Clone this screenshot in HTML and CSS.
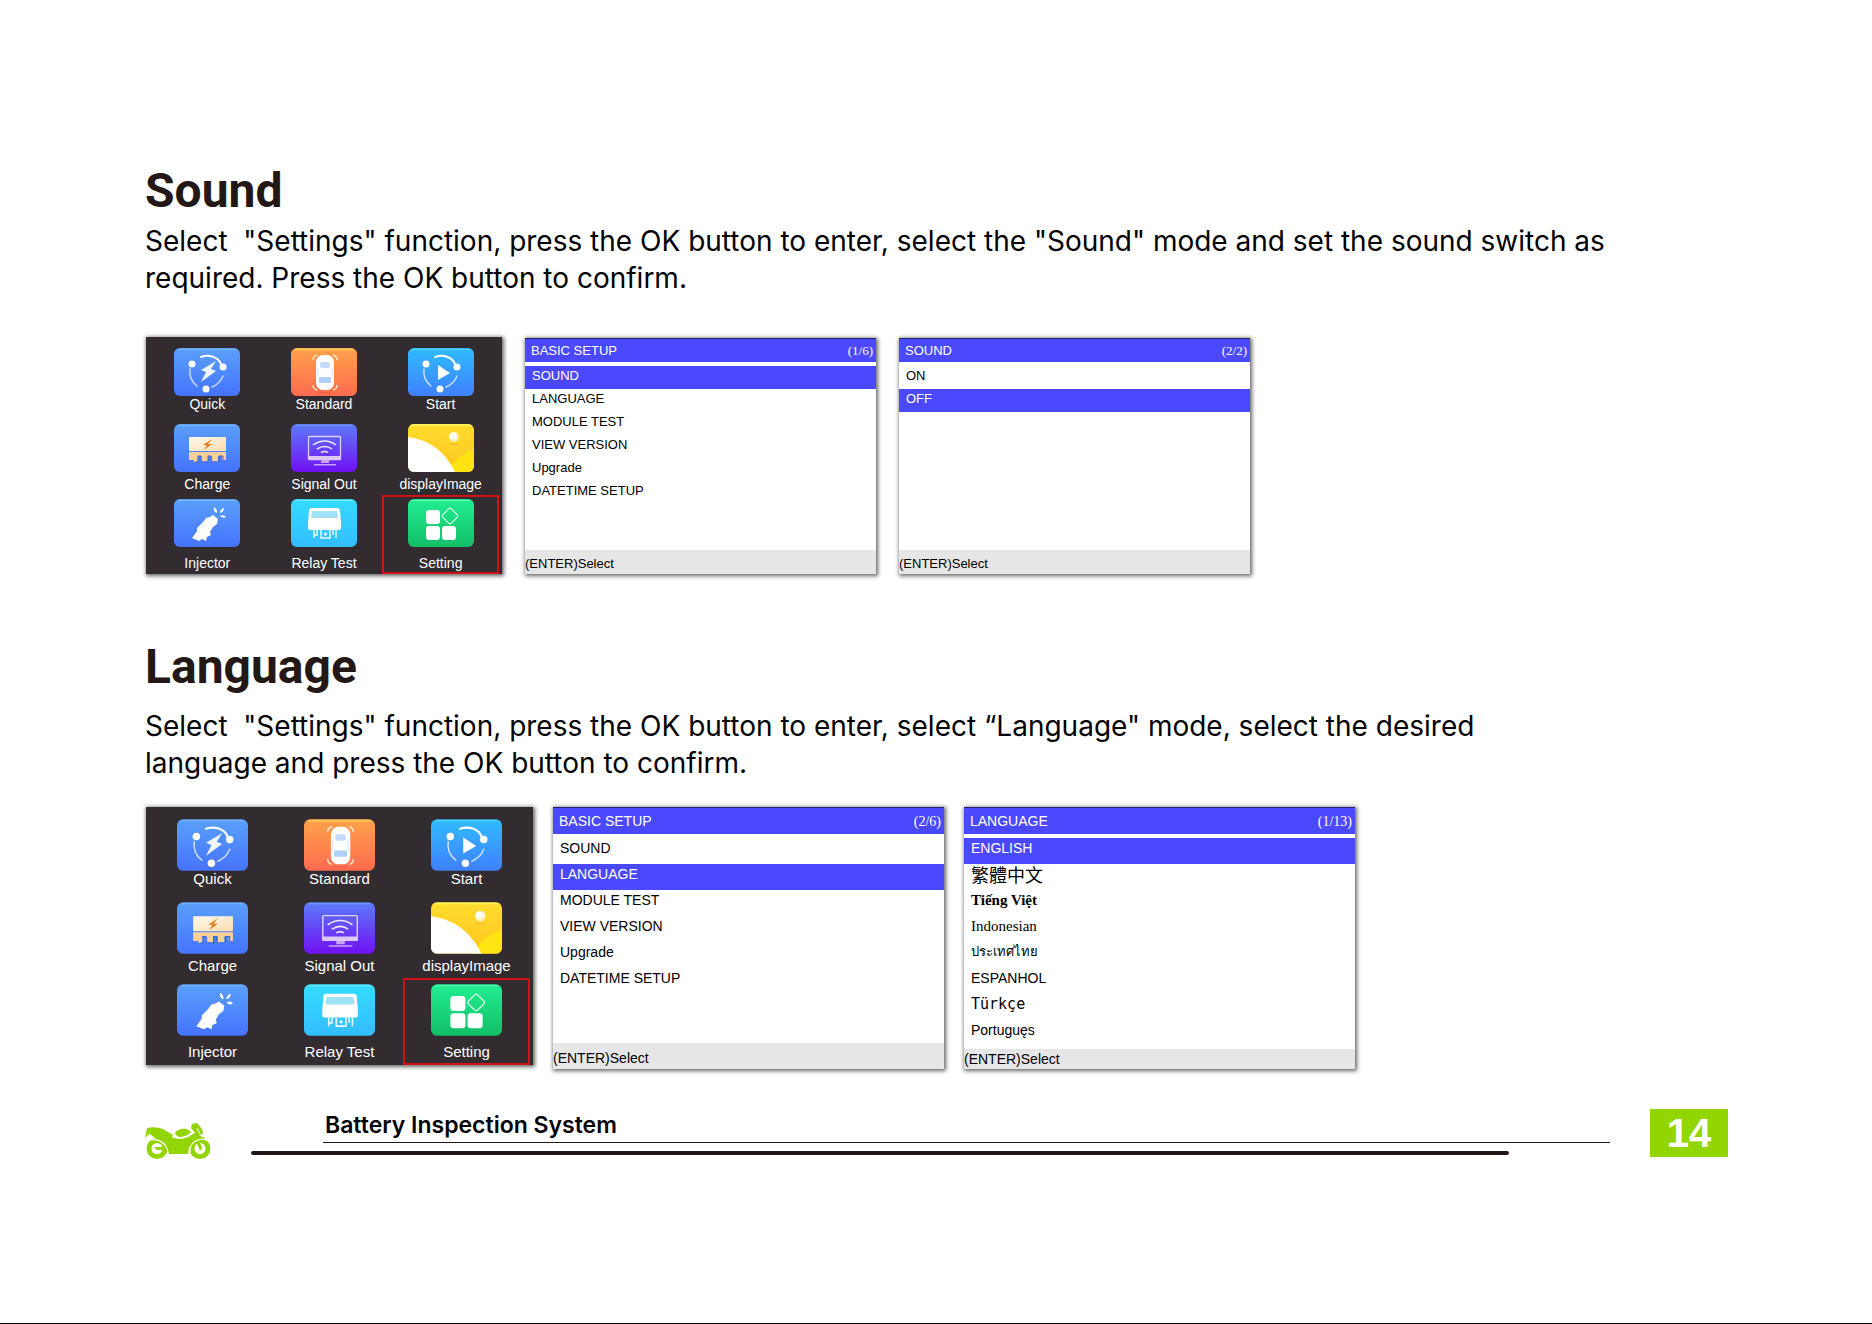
FILE: index.html
```html
<!DOCTYPE html>
<html lang="en">
<head>
    <meta charset="UTF-8">
    <meta name="viewport" content="width=device-width, initial-scale=1">
    <title>Battery Inspection System - 14</title>
    <link rel="stylesheet" href="styles.css">
</head>
<body>
<!-- icon sprite -->
<svg class="sprite" aria-hidden="true">
    <defs>
        <linearGradient id="blue" x1="0" y1="0" x2="0" y2="1">
            <stop offset="0" stop-color="#5aa0fa"/>
            <stop offset="1" stop-color="#4573ff"/>
        </linearGradient>
        <linearGradient id="orange" x1="0" y1="0" x2="0" y2="1">
            <stop offset="0" stop-color="#ffa24a"/>
            <stop offset="1" stop-color="#ff6b4f"/>
        </linearGradient>
        <linearGradient id="sky" x1="0" y1="0" x2="0" y2="1">
            <stop offset="0" stop-color="#2fbcff"/>
            <stop offset="1" stop-color="#3f80ff"/>
        </linearGradient>
        <linearGradient id="violet" x1="0" y1="0" x2="0" y2="1">
            <stop offset="0" stop-color="#5c7cf8"/>
            <stop offset="1" stop-color="#7010f4"/>
        </linearGradient>
        <linearGradient id="yellow" x1="0" y1="0" x2="0" y2="1">
            <stop offset="0" stop-color="#ffdc2e"/>
            <stop offset="1" stop-color="#ffc61e"/>
        </linearGradient>
        <linearGradient id="cyan" x1="0" y1="0" x2="0" y2="1">
            <stop offset="0" stop-color="#34dcff"/>
            <stop offset="1" stop-color="#33bdff"/>
        </linearGradient>
        <linearGradient id="green" x1="0" y1="0" x2="0" y2="1">
            <stop offset="0" stop-color="#22ee92"/>
            <stop offset="1" stop-color="#12be66"/>
        </linearGradient>
        <linearGradient id="cream" x1="0" y1="0" x2="1" y2="1">
            <stop offset="0" stop-color="#fffaf0"/>
            <stop offset="1" stop-color="#ffdcae"/>
        </linearGradient>
        <clipPath id="tileClip"><rect width="66" height="48" rx="6"/></clipPath>
    </defs>
    <symbol id="ring" viewBox="0 0 66 48">
        <g fill="none" stroke="#fff" stroke-linecap="round">
            <path d="M27 9c8-3 17 0 20 7" stroke-width="2"/>
            <path d="M16 21c-1 7 2 13 7 17" stroke-width="1.5" opacity=".7"/>
            <path d="M49 28c-2 5-6 9-11 11" stroke-width="1.5" opacity=".7"/>
        </g>
        <g fill="#fff">
            <circle cx="18" cy="16" r="3.5"/>
            <circle cx="49" cy="19" r="3.5"/>
            <circle cx="32" cy="41" r="3.5"/>
        </g>
    </symbol>
    <symbol id="quick" viewBox="0 0 66 48">
        <rect width="66" height="48" rx="6" fill="url(#blue)"/>
        <path d="M4 1.500h58" stroke="#8fc6ff" stroke-opacity=".6"/>
        <use href="#ring"/>
        <path d="M42 13 27 22l5 2-5 10 15-11-5-2z" fill="#f0f6ff"/>
    </symbol>
    <symbol id="standard" viewBox="0 0 66 48">
        <rect width="66" height="48" rx="6" fill="url(#orange)"/>
        <path d="M4 1.500h58" stroke="#ffe05a" stroke-opacity=".6" stroke-width="2"/>
        <g fill="none" stroke="#ffe8c8" stroke-width="1.300">
            <path d="M22 12q0-4 4-5M42 7q4 1 4 5M22 37q0 4 4 5M42 42q4-1 4-5"/>
        </g>
        <rect x="25" y="7" width="18" height="35" rx="7" fill="#fff"/>
        <rect x="29" y="14" width="10" height="6" rx="2" fill="#c4dcfa"/>
        <rect x="28" y="29" width="12" height="6" rx="1" fill="#aed0f8"/>
        <path d="M27 20v9M41 20v9" stroke="#d8e6f6"/>
        <path d="M28 44.500h12" stroke="#d04a2a" stroke-dasharray="1 1.500"/>
    </symbol>
    <symbol id="start" viewBox="0 0 66 48">
        <rect width="66" height="48" rx="6" fill="url(#sky)"/>
        <path d="M4 1.500h58" stroke="#6fe0ff" stroke-opacity=".6"/>
        <use href="#ring"/>
        <path d="M30 17v15l12-7z" fill="#fff"/>
    </symbol>
    <symbol id="charge" viewBox="0 0 66 48">
        <rect width="66" height="48" rx="6" fill="url(#blue)"/>
        <path d="M4 1.500h58" stroke="#8fc6ff" stroke-opacity=".6"/>
        <rect x="15" y="13" width="37" height="14" rx="1" fill="url(#cream)"/>
        <path d="M15 28h37v8h-4v-4h-4v5h-6v-5h-4v5h-6v-5h-4v6h-4v-2h-5z" fill="#fbd098"/>
        <path d="M21 38h3v-6h3M34 39v-7h3v4M45 38v-6h4v4" fill="none" stroke="#3a66c8"/>
        <path d="M38 15l-9 6h4l-3 5 8-6h-4z" fill="#e87d1c"/>
    </symbol>
    <symbol id="signal" viewBox="0 0 66 48">
        <rect width="66" height="48" rx="6" fill="url(#violet)"/>
        <path d="M4 1.500h58" stroke="#7fb0ff" stroke-opacity=".6"/>
        <rect x="17.500" y="12.500" width="32" height="23" rx="1" fill="none" stroke="#ddd2ff" stroke-width="1.300"/>
        <path d="M17 32h33v4H17z" fill="#dcc8ff"/>
        <path d="M30 36h8v3h-8zM23 40h22v1.500H23z" fill="#c8a4ff"/>
        <g fill="none" stroke="#ede6ff" stroke-width="1.500">
            <path d="M22 21q12-8 23 0M26 25q8-5 15 0M30 28.500q4-2 7 0"/>
        </g>
    </symbol>
    <symbol id="image" viewBox="0 0 66 48">
        <g clip-path="url(#tileClip)">
            <rect width="66" height="48" fill="url(#yellow)"/>
            <path d="M0 0h66v2H0z" fill="#fff05a"/>
            <path d="M40 48Q46 32 66 26v22z" fill="#ffe414"/>
            <path d="M0 13Q32 17 47 48H0z" fill="#fff"/>
            <circle cx="46" cy="13" r="5" fill="#fff0b8"/>
            <circle cx="45" cy="12" r="3.500" fill="#fff"/>
            <path d="M42 20h8" stroke="#d8a030" stroke-dasharray="1.500 1.500"/>
        </g>
    </symbol>
    <symbol id="injector" viewBox="0 0 66 48">
        <rect width="66" height="48" rx="6" fill="url(#blue)"/>
        <path d="M4 1.500h58" stroke="#8fc6ff" stroke-opacity=".6"/>
        <path d="M39 16l5 4-1 5-4 3-3 5 1 3-4 2-1 4-4-2-3 2-7-3 5-7 0-3 6-6 3-4 4-1z" fill="#fff"/>
        <path d="M40 8q4 3 3 6-4-1-3-6zM50 9q0 4-4 5 0-4 4-5zM46 17q4-2 6 1-3 2-6-1z" fill="#fff"/>
    </symbol>
    <symbol id="relay" viewBox="0 0 66 48">
        <rect width="66" height="48" rx="6" fill="url(#cyan)"/>
        <path d="M4 1.500h58" stroke="#8af4ff" stroke-opacity=".7"/>
        <path d="M21 9h25q3 0 3 3l1 11v6q0 2-2 2H19q-2 0-2-2v-6l1-11q0-3 3-3z" fill="#fff"/>
        <path d="M21 12h25l1 7H20z" fill="#9fe2f6"/>
        <path d="M23 31v8M26 31v5h-3M45 31v8M42 31v5M30 31v8h9v-8" fill="none" stroke="#eafaff" stroke-width="1.500"/>
        <circle cx="34.500" cy="35" r="1.500" fill="#fff"/>
    </symbol>
    <symbol id="setting" viewBox="0 0 66 48">
        <rect width="66" height="48" rx="6" fill="url(#green)"/>
        <path d="M4 1.500h58" stroke="#7dffc4" stroke-opacity=".7"/>
        <g fill="#fff">
            <rect x="18" y="11" width="14" height="14" rx="3"/>
            <rect x="18" y="27" width="14" height="14" rx="3"/>
            <rect x="34" y="27" width="14" height="14" rx="3"/>
        </g>
        <rect x="36" y="11" width="12" height="12" rx="2" fill="none" stroke="#d4ffe8" stroke-width="1.200" transform="rotate(45 42 17)"/>
    </symbol>
</svg>

<main class="page">
    <section class="topic">
        <h2>Sound</h2>
        <p>Select&nbsp; "Settings" function, press the OK button to enter, select the "Sound" mode and set the sound switch as<br>required. Press the OK button to confirm.</p>
        <div class="screens">
            <div class="launcher">
                <button class="tile"><svg><use href="#quick"/></svg><span>Quick</span></button>
                <button class="tile"><svg><use href="#standard"/></svg><span>Standard</span></button>
                <button class="tile"><svg><use href="#start"/></svg><span>Start</span></button>
                <button class="tile middle"><svg><use href="#charge"/></svg><span>Charge</span></button>
                <button class="tile middle"><svg><use href="#signal"/></svg><span>Signal Out</span></button>
                <button class="tile middle"><svg><use href="#image"/></svg><span>displayImage</span></button>
                <button class="tile bottom"><svg><use href="#injector"/></svg><span>Injector</span></button>
                <button class="tile bottom"><svg><use href="#relay"/></svg><span>Relay Test</span></button>
                <button class="tile bottom marked"><svg><use href="#setting"/></svg><span>Setting</span></button>
            </div>
            <div class="screen">
                <header><span>BASIC SETUP</span><span class="count">(1/6)</span></header>
                <ul>
                    <li class="active">SOUND</li>
                    <li>LANGUAGE</li>
                    <li>MODULE TEST</li>
                    <li>VIEW VERSION</li>
                    <li>Upgrade</li>
                    <li>DATETIME SETUP</li>
                </ul>
                <footer>(ENTER)Select</footer>
            </div>
            <div class="screen">
                <header><span>SOUND</span><span class="count">(2/2)</span></header>
                <ul>
                    <li>ON</li>
                    <li class="active">OFF</li>
                </ul>
                <footer>(ENTER)Select</footer>
            </div>
        </div>
    </section>

    <section class="topic large">
        <h2>Language</h2>
        <p>Select&nbsp; "Settings" function, press the OK button to enter, select “Language" mode, select the desired<br>language and press the OK button to confirm.</p>
        <div class="screens">
            <div class="launcher">
                <button class="tile"><svg><use href="#quick"/></svg><span>Quick</span></button>
                <button class="tile"><svg><use href="#standard"/></svg><span>Standard</span></button>
                <button class="tile"><svg><use href="#start"/></svg><span>Start</span></button>
                <button class="tile middle"><svg><use href="#charge"/></svg><span>Charge</span></button>
                <button class="tile middle"><svg><use href="#signal"/></svg><span>Signal Out</span></button>
                <button class="tile middle"><svg><use href="#image"/></svg><span>displayImage</span></button>
                <button class="tile bottom"><svg><use href="#injector"/></svg><span>Injector</span></button>
                <button class="tile bottom"><svg><use href="#relay"/></svg><span>Relay Test</span></button>
                <button class="tile bottom marked"><svg><use href="#setting"/></svg><span>Setting</span></button>
            </div>
            <div class="screen">
                <header><span>BASIC SETUP</span><span class="count">(2/6)</span></header>
                <ul>
                    <li>SOUND</li>
                    <li class="active">LANGUAGE</li>
                    <li>MODULE TEST</li>
                    <li>VIEW VERSION</li>
                    <li>Upgrade</li>
                    <li>DATETIME SETUP</li>
                </ul>
                <footer>(ENTER)Select</footer>
            </div>
            <div class="screen languages">
                <header><span>LANGUAGE</span><span class="count">(1/13)</span></header>
                <ul>
                    <li class="active">ENGLISH</li>
                    <li class="chinese" lang="zh-Hant">繁體中文</li>
                    <li class="serif" lang="vi"><b>Tiếng Việt</b></li>
                    <li class="serif">Indonesian</li>
                    <li class="thai" lang="th">ประเทศไทย</li>
                    <li>ESPANHOL</li>
                    <li class="mono" lang="tr">Türkçe</li>
                    <li>Portuguęs</li>
                </ul>
                <footer>(ENTER)Select</footer>
            </div>
        </div>
    </section>

    <footer class="page-footer">
        <svg class="bike" viewBox="0 0 66 36" aria-hidden="true">
            <g fill="#93d500">
                <path d="M0 15 2 5q8-2 16 1l10 6q-2 2 1 3 10 2 17-3l4-2-4-5 1-4 5-1 5 6 1 5-4 1 3 2q3 0 5 4-7-3-12 1l-6 5-1 7H24l-2-5q-3-8-12-11L5 11q-3 1-5 4z"/>
                <path d="M30 10q4-5 12-4l4 3q-3 4-10 5-5 0-6-4z"/>
            </g>
            <g fill="none" stroke="#93d500" stroke-width="5">
                <circle cx="12" cy="25.500" r="8"/>
                <circle cx="55" cy="25.500" r="8"/>
            </g>
            <path d="M9 24h14l1 3H12zM50 16l3-1 4 10-2 3z" fill="#93d500"/>
            <path d="M28 13q8 5 18-1M52 5l3 6" fill="none" stroke="#fff"/>
            <path d="M1 18q12-4 19 4 3 4 3 8M45 29q-1-9 8-12 6-2 10 1" fill="none" stroke="#fff" stroke-width="1.200"/>
        </svg>
        <div class="rules">
            <div class="title">Battery Inspection System</div>
            <div class="bar"></div>
        </div>
        <div class="number">14</div>
    </footer>
</main>
</body>
</html>
```
FILE: styles.css
```css
* {
    margin: 0;
    padding: 0;
    box-sizing: border-box;
}

body {
    background: #fff;
    color: #000;
    font-family: "Liberation Sans", Arial, sans-serif;
}

.sprite {
    position: absolute;
    width: 0;
    height: 0;
}

.page {
    min-height: 100vh;
    padding: 163px 144px 40px 145px;
    border-bottom: 1px solid #000;
}

.topic {
    --icon-w: 66px;
    --icon-h: 48px;
    --text: 13px;
    --label: 14px;
    --row: 23px;
    --bar: 24px;
}

.topic.large {
    --icon-w: 71px;
    --icon-h: 52px;
    --text: 14px;
    --label: 15px;
    --row: 26px;
    --bar: 27px;
    margin-top: 65px;
}

h2 {
    color: #231815;
    font: 700 48px/56px Roboto, sans-serif;
}

p {
    margin-top: 4px;
    font: 400 28px/37px Inter, sans-serif;
}

.large p {
    margin-top: 13px;
}

.screens {
    display: flex;
    align-items: flex-start;
    gap: 23px;
    margin-top: 40px;
    padding-left: 1px;
}

.large .screens {
    gap: 20px;
    margin-top: 25px;
}

/* device home screen */
.launcher {
    display: grid;
    grid-template-columns: repeat(3, 1fr);
    grid-template-rows: 76px 75px 79px;
    width: 356px;
    padding: 7px 3px 0;
    background: #322c31;
    box-shadow: 1px 1px 4px 1px rgba(0, 0, 0, .6);
}

.large .launcher {
    grid-template-rows: 83px 82px 87px;
    width: 387px;
    padding-top: 6px;
}

.tile {
    display: flex;
    flex-direction: column;
    align-items: center;
    padding-top: 4px;
    border: 0;
    background: none;
    color: #fff;
    font: var(--label)/16px "Liberation Sans", Arial, sans-serif;
}

.large .tile {
    padding-top: 6px;
}

.tile svg {
    width: var(--icon-w);
    height: var(--icon-h);
}

.middle span {
    margin-top: 4px;
}

.bottom span {
    margin-top: 8px;
}

.marked {
    border: 2px solid #d01212;
    padding-top: 2px;
}

.large .marked {
    padding-top: 4px;
}

/* device menu screens */
.screen {
    display: flex;
    flex-direction: column;
    width: 351px;
    min-height: 236px;
    margin-top: 1px;
    background: #fff;
    box-shadow: 1px 1px 4px 1px rgba(0, 0, 0, .6);
    font-size: var(--text);
}

.large .screen {
    width: 391px;
    min-height: 262px;
    margin-top: 0;
}

.screen header {
    display: flex;
    justify-content: space-between;
    height: var(--bar);
    padding: 0 3px 0 6px;
    border-top: 1px solid #22226a;
    background: #4b49ff;
    color: #fff;
    line-height: var(--bar);
}

.count {
    font-family: "Liberation Serif", serif;
}

.screen ul {
    flex: 1;
    padding-top: 4px;
    list-style: none;
}

.screen li {
    height: var(--row);
    padding-left: 7px;
    line-height: 20px;
}

.screen .active {
    background: #4b49ff;
    color: #fff;
}

.screen .chinese {
    font-family: "Noto Sans CJK TC", sans-serif;
    font-size: 18px;
}

.screen .serif {
    font-family: "Liberation Serif", serif;
    font-size: 15px;
}

.screen .thai {
    font-family: "Liberation Serif", serif;
    font-size: 13px;
}

.screen .mono {
    font-family: "DejaVu Sans Mono", monospace;
    font-size: 15px;
}

.screen footer {
    height: var(--bar);
    background: #e6e6e6;
    line-height: 28px;
}

.large .screen footer {
    height: 26px;
    line-height: 30px;
}

.large .languages footer {
    height: 20px;
    line-height: 20px;
}

.page-footer {
    display: flex;
    align-items: flex-start;
    margin-top: 40px;
}

.bike {
    width: 66px;
    height: 36px;
    margin-top: 14px;
}

.rules {
    flex: 1;
    margin: 0 40px;
}

.title {
    margin-left: 72px;
    padding-left: 2px;
    border-bottom: 1px solid #231815;
    font: 600 23px/33px Inter, sans-serif;
}

.bar {
    height: 4px;
    margin: 8px 101px 0 0;
    border-radius: 2px;
    background: #231815;
}

.number {
    width: 78px;
    background: #93d500;
    color: #fff;
    font-size: 40px;
    font-weight: 700;
    line-height: 48px;
    text-align: center;
}
```
